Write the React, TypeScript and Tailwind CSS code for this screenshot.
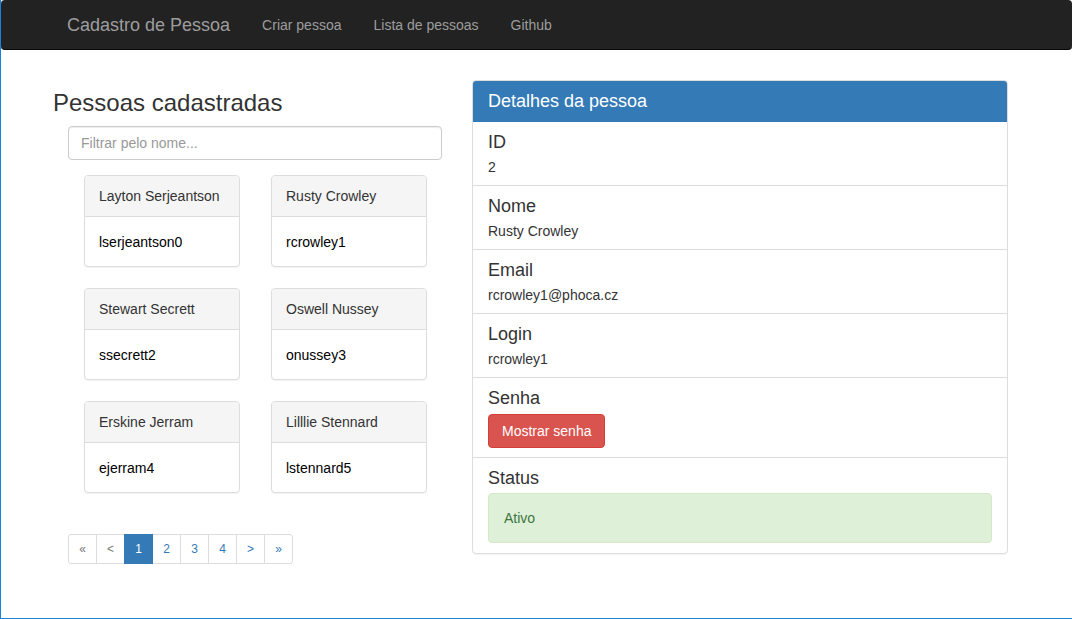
import React from "react";

type Person = { name: string; login: string };

const PEOPLE: Person[] = [
  { name: "Layton Serjeantson", login: "lserjeantson0" },
  { name: "Rusty Crowley", login: "rcrowley1" },
  { name: "Stewart Secrett", login: "ssecrett2" },
  { name: "Oswell Nussey", login: "onussey3" },
  { name: "Erskine Jerram", login: "ejerram4" },
  { name: "Lilllie Stennard", login: "lstennard5" },
];

const PAGES = [
  { label: "«", tone: "text-[#777]" },
  { label: "<", tone: "text-[#777]" },
  { label: "1", tone: "active" },
  { label: "2", tone: "text-[#337ab7]" },
  { label: "3", tone: "text-[#337ab7]" },
  { label: "4", tone: "text-[#337ab7]" },
  { label: ">", tone: "text-[#337ab7]" },
  { label: "»", tone: "text-[#337ab7]" },
];

function Navbar() {
  return (
    <nav className="flex h-[50px] items-center rounded-[4px] border-b border-[#080808] bg-[#222] pl-[66px]">
      <span className="text-[18px] text-[#9d9d9d]">Cadastro de Pessoa</span>
      <div className="ml-[32px] flex gap-[32px] text-[14px] text-[#9d9d9d]">
        <span>Criar pessoa</span>
        <span>Lista de pessoas</span>
        <span>Github</span>
      </div>
    </nav>
  );
}

function PersonCard({ p }: { p: Person }) {
  return (
    <div className="w-[156px] overflow-hidden rounded-[4px] border border-[#ddd] bg-white shadow-[0_1px_1px_rgba(0,0,0,0.05)]">
      <div className="flex h-[41px] items-center border-b border-[#ddd] bg-[#f5f5f5] px-[14px] text-[#333]">
        {p.name}
      </div>
      <div className="flex h-[49px] items-center px-[14px] text-black">
        {p.login}
      </div>
    </div>
  );
}

function DetailItem({
  label,
  children,
  last,
}: {
  label: string;
  children: React.ReactNode;
  last?: boolean;
}) {
  return (
    <div
      className={`px-[15px] pt-[10px] ${last ? "pb-[10px]" : "border-b border-[#ddd] pb-[8px]"}`}
    >
      <h4 className="mb-[5px] text-[18px] leading-[20px] text-[#333]">{label}</h4>
      {children}
    </div>
  );
}

export default function App() {
  return (
    <div className="h-[619px] w-[1072px] overflow-hidden border-b border-l border-[#1883d7] bg-white font-['Liberation_Sans',Arial,sans-serif] text-[14px] leading-[20px] text-[#333]">
      <Navbar />
      <div className="flex">
        <section className="ml-[52px] w-[388px]">
          <h3 className="mt-[40px] text-[24px] leading-[26px] text-[#333]">
            Pessoas cadastradas
          </h3>
          <input
            className="ml-[15px] mt-[10px] h-[34px] w-[374px] rounded-[4px] border border-[#ccc] px-[12px] text-[14px] shadow-[inset_0_1px_1px_rgba(0,0,0,0.075)] outline-none placeholder:text-[#999]"
            placeholder="Filtrar pelo nome..."
          />
          <div className="ml-[31px] mt-[15px] grid grid-cols-[156px_156px] gap-x-[31px] gap-y-[21px]">
            {PEOPLE.map((p) => (
              <PersonCard key={p.login} p={p} />
            ))}
          </div>
          <ul className="ml-[15px] mt-[41px] flex">
            {PAGES.map((pg, i) => (
              <li
                key={i}
                className={`flex h-[30px] w-[29px] items-center justify-center border text-[12px] ${i > 0 ? "-ml-px" : ""} ${i === 0 ? "rounded-l-[3px]" : ""} ${i === PAGES.length - 1 ? "rounded-r-[3px]" : ""} ${pg.tone === "active" ? "relative z-10 border-[#337ab7] bg-[#337ab7] text-white" : `border-[#ddd] bg-white ${pg.tone}`}`}
              >
                {pg.label}
              </li>
            ))}
          </ul>
        </section>

        <section className="ml-[31px] mt-[30px] w-[536px] self-start overflow-hidden rounded-[4px] border border-[#ddd] shadow-[0_1px_1px_rgba(0,0,0,0.05)]">
          <div className="-mx-px -mt-px flex h-[42px] items-center bg-[#337ab7] px-[16px] text-[18px] text-white">
            Detalhes da pessoa
          </div>
          <DetailItem label="ID">
            <p>2</p>
          </DetailItem>
          <DetailItem label="Nome">
            <p>Rusty Crowley</p>
          </DetailItem>
          <DetailItem label="Email">
            <p>rcrowley1@phoca.cz</p>
          </DetailItem>
          <DetailItem label="Login">
            <p>rcrowley1</p>
          </DetailItem>
          <DetailItem label="Senha">
            <button
              type="button"
              className="mb-[1px] mt-[1px] h-[34px] rounded-[4px] border border-[#d43f3a] bg-[#d9534f] px-[13px] text-[14px] text-white"
            >
              Mostrar senha
            </button>
          </DetailItem>
          <DetailItem label="Status" last>
            <div className="flex h-[50px] items-center rounded-[4px] border border-[#d6e9c6] bg-[#dff0d8] px-[15px] text-[#3c763d]">
              Ativo
            </div>
          </DetailItem>
        </section>
      </div>
    </div>
  );
}
